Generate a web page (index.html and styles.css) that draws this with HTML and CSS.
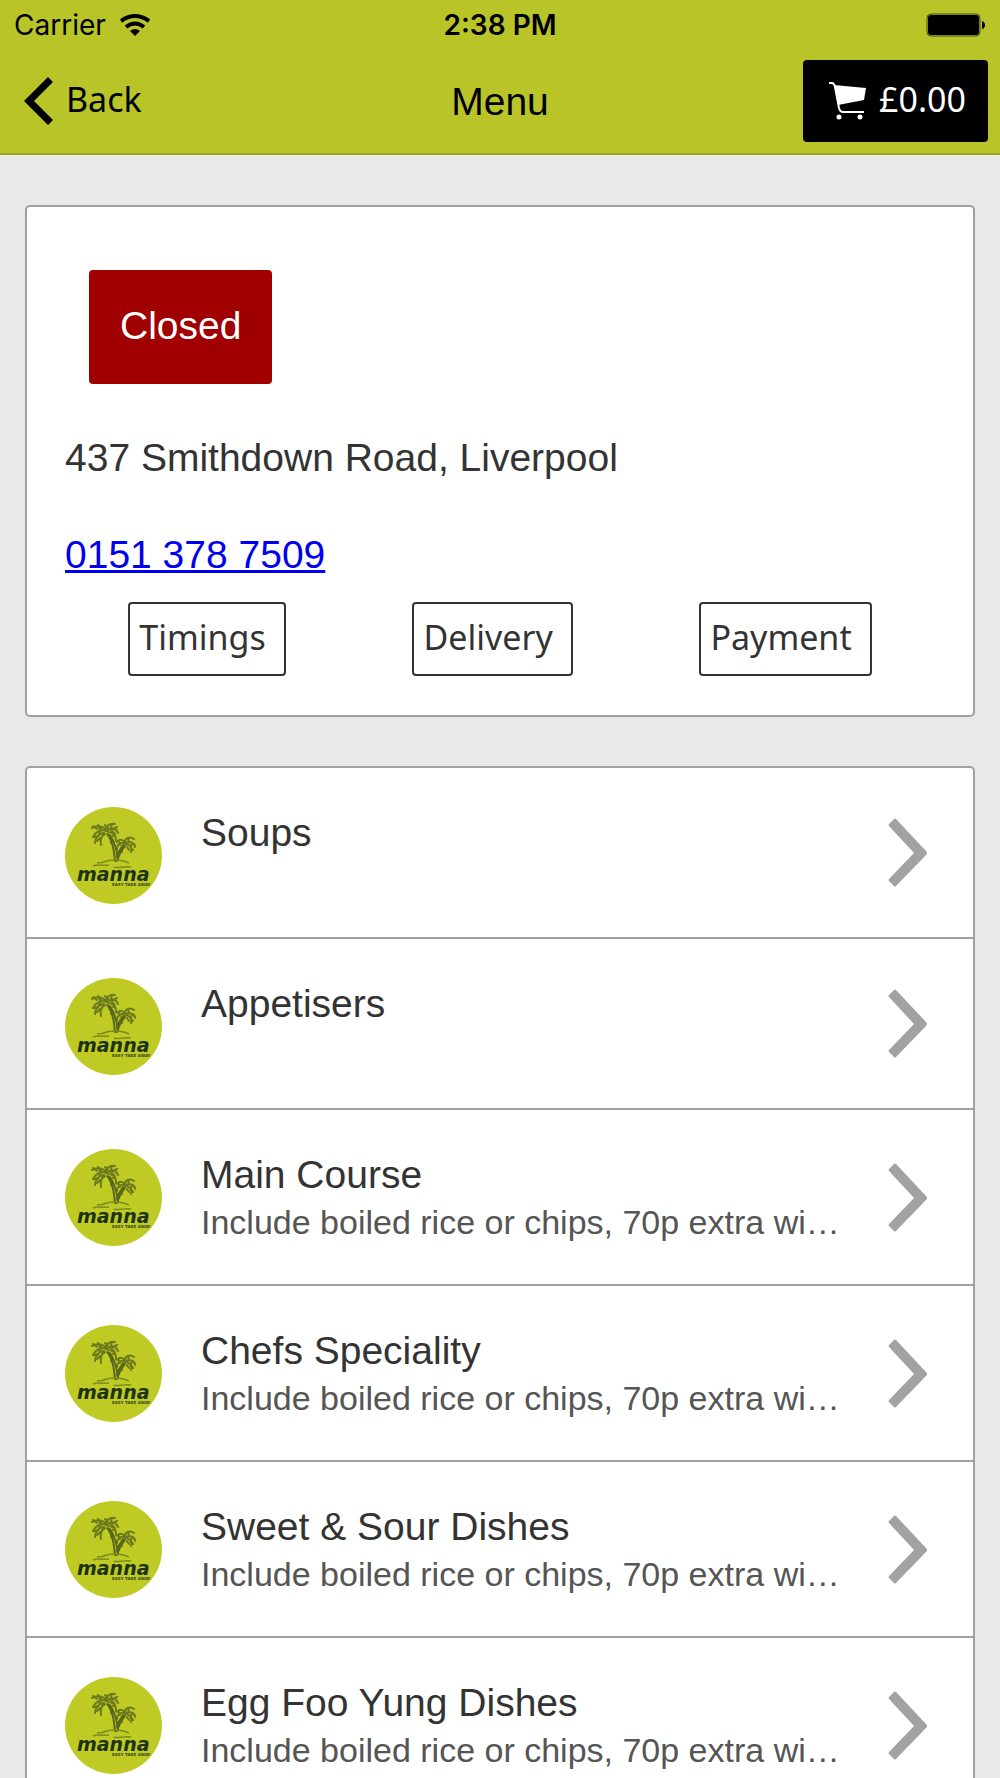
FILE: index.html
```
<!DOCTYPE html>
<html lang="en">
<head>
    <meta charset="UTF-8">
    <meta name="viewport" content="width=device-width, initial-scale=1.0">
    <title>Menu</title>
    <link rel="stylesheet" href="styles.css">
</head>
<body>
    <!-- shared icons -->
    <svg class="defs" width="0" height="0" aria-hidden="true">
        <symbol id="logo" viewBox="0 0 97 97">
            <circle cx="48.500" cy="48.500" r="48.500" fill="#bfca24"/>
            <g fill="none" stroke="#6b7a1c" stroke-width="2" stroke-linecap="round" stroke-linejoin="round">
                <path d="M42 24c-3-5-10-6-15-3M41 24c-5-2-11 1-13 6M39 26c-5 0-9 5-9 10M40 27c-4 2-5 6-4 11"/>
                <path d="M41 23c0-4 4-7 9-6M42 24c4-4 9-3 11 2M43 25c5 0 8 3 8 9M42 27c4 2 5 5 4 9"/>
                <path d="M28 19l4 3M33 18l2 4M29 30l4-1M32 34l3-3M47 17l-1 4M52 20l-4 2M48 29l2-2M40 18l3 3M36 22l-2 5M46 23l3 3"/>
                <path d="M60 36c-2-4-6-4-8-1M60 36c-4-1-8 1-8 6M60 35c0-4 5-6 9-3M61 36c4-2 9 0 9 4M61 37c4 1 7 4 5 8M59 38c-2 2-3 4-2 7"/>
                <path d="M63 31l1 4M68 37l-3 2M54 35l1 3M68 43l-2-2M62 40l2 3"/>
                <path d="M43 28c5 7 6 16 7 26M45 28c5 8 7 14 8 25" stroke="#59681a"/>
                <path d="M60 39c-4 4-6 9-8 15M58 38c-3 4-5 8-6 12" stroke="#59681a"/>
            </g>
            <path d="M36 56c8-4 20-4 28 0M28 59c5-2 11 0 16-1M49 60c4 2 8-1 17 0M32 56l8-1" fill="none" stroke="#7b8c1d" stroke-width="1.500"/>
            <text class="logo-name" x="12" y="74">manna</text>
            <text class="logo-sub" x="47" y="79">EASY TAKE AWAY</text>
        </symbol>
        <symbol id="arrow" viewBox="0 0 40 70">
            <path d="M1 8Q0 7 1 6L6 1Q7 0 8 1L38 33Q40 35 38 37L8 68Q7 69 6 68L1 63Q0 62 1 61L26 35Z" fill="#a2a2a2"/>
        </symbol>
    </svg>

    <header class="header">
        <div class="status">
            <div class="carrier">
                Carrier
                <svg width="30" height="22" viewBox="0 0 30 22">
                    <g fill="none" stroke="#000" stroke-width="4">
                        <path d="M1 7Q15-3 29 7"/>
                        <path d="M6 13Q15 6 24 13"/>
                    </g>
                    <path d="M10 17Q15 13 20 17L15 22Z"/>
                </svg>
            </div>
            <div class="time">2:38 PM</div>
            <svg class="battery" width="60" height="24" viewBox="0 0 60 24">
                <rect x="1" y="1" width="53" height="22" rx="4" fill="none" stroke="#45490d"/>
                <rect x="2" y="2" width="51" height="20" rx="3"/>
                <path d="M56 8Q59 9 59 12T56 16Z"/>
            </svg>
        </div>
        <nav class="nav">
            <a class="back" href="#">
                <svg width="30" height="48" viewBox="0 0 30 48">
                    <path d="M24 0L29 5L10 24L29 43L24 48L0 24Z"/>
                </svg>
                <span>Back</span>
            </a>
            <h1>Menu</h1>
            <button class="basket" type="button">
                <svg width="38" height="38" viewBox="0 0 38 38" fill="#fff">
                    <path d="M5 3L37 6L35 18L9 23Z"/>
                    <path d="M0 1H3Q5 1 6 5L10 26Q11 30 14 30H35" fill="none" stroke="#fff" stroke-width="2"/>
                    <circle cx="10" cy="35" r="2.500"/>
                    <circle cx="31" cy="35" r="2.500"/>
                </svg>
                <span>£0.00</span>
            </button>
        </nav>
    </header>

    <main>
        <section class="card info">
            <div class="closed">Closed</div>
            <p>437 Smithdown Road, Liverpool</p>
            <p><a href="tel:01513787509">0151 378 7509</a></p>
            <div class="buttons">
                <button type="button">Timings</button>
                <button type="button">Delivery</button>
                <button type="button">Payment</button>
            </div>
        </section>

        <ul class="card menu">
            <li>
                <a href="#">
                    <svg class="logo"><use href="#logo"/></svg>
                    <div class="text"><h2>Soups</h2></div>
                    <svg class="arrow"><use href="#arrow"/></svg>
                </a>
            </li>
            <li>
                <a href="#">
                    <svg class="logo"><use href="#logo"/></svg>
                    <div class="text"><h2>Appetisers</h2></div>
                    <svg class="arrow"><use href="#arrow"/></svg>
                </a>
            </li>
            <li>
                <a href="#">
                    <svg class="logo"><use href="#logo"/></svg>
                    <div class="text has-note">
                        <h2>Main Course</h2>
                        <p>Include boiled rice or chips, 70p extra wi…</p>
                    </div>
                    <svg class="arrow"><use href="#arrow"/></svg>
                </a>
            </li>
            <li>
                <a href="#">
                    <svg class="logo"><use href="#logo"/></svg>
                    <div class="text has-note">
                        <h2>Chefs Speciality</h2>
                        <p>Include boiled rice or chips, 70p extra wi…</p>
                    </div>
                    <svg class="arrow"><use href="#arrow"/></svg>
                </a>
            </li>
            <li>
                <a href="#">
                    <svg class="logo"><use href="#logo"/></svg>
                    <div class="text has-note">
                        <h2>Sweet &amp; Sour Dishes</h2>
                        <p>Include boiled rice or chips, 70p extra wi…</p>
                    </div>
                    <svg class="arrow"><use href="#arrow"/></svg>
                </a>
            </li>
            <li>
                <a href="#">
                    <svg class="logo"><use href="#logo"/></svg>
                    <div class="text has-note">
                        <h2>Egg Foo Yung Dishes</h2>
                        <p>Include boiled rice or chips, 70p extra wi…</p>
                    </div>
                    <svg class="arrow"><use href="#arrow"/></svg>
                </a>
            </li>
        </ul>
    </main>
</body>
</html>
```
FILE: styles.css
```
* {
    box-sizing: border-box;
}
html {
    scrollbar-width: none;
}
body {
    margin: 0;
    background: #e9e9e9;
    color: #333;
    font-family: "Liberation Sans", Arial, sans-serif;
    font-size: 39px;
}
h1, h2, p, ul {
    margin: 0;
    padding: 0;
    font-weight: normal;
}
.defs {
    position: absolute;
}

/* header */
.header {
    background: #b8c427;
    border-bottom: 2px solid #98a31f;
    color: #000;
}
.status, .nav {
    display: grid;
    grid-template-columns: minmax(0, 1fr) auto minmax(0, 1fr);
    align-items: center;
}
.status {
    padding: 0 14px;
    height: 50px;
    font-family: Inter, Roboto, sans-serif;
    font-size: 28px;
}
.carrier {
    display: flex;
    align-items: center;
    gap: 14px;
}
.time {
    font-weight: 600;
}
.battery {
    justify-self: end;
}
.nav {
    padding: 10px 12px 11px 24px;
}
.back {
    display: flex;
    align-items: center;
    gap: 12px;
    color: #000;
    font-family: "Noto Sans", sans-serif;
    font-size: 34px;
    line-height: 48px;
    text-decoration: none;
}
.back span, .basket span {
    padding-bottom: 5px;
}
.nav h1 {
    padding: 2px 12px 0 0;
    font-size: 39px;
    line-height: 44px;
}
.basket {
    justify-self: end;
    display: flex;
    align-items: center;
    gap: 12px;
    height: 82px;
    padding: 0 22px 0 26px;
    border: none;
    border-radius: 4px;
    background: #000;
    color: #fff;
    font-family: "Noto Sans", sans-serif;
    font-size: 34px;
    cursor: pointer;
}

/* cards */
.card {
    margin: 50px 25px 49px;
    border: 2px solid #a0a0a0;
    border-radius: 5px;
    background: #fff;
}
.info {
    padding: 39px 38px;
}
.closed {
    width: fit-content;
    margin: 24px 24px 50px;
    padding: 34px 31px 36px;
    border-radius: 4px;
    background: #a00000;
    color: #fff;
    line-height: 44px;
}
.info p {
    margin-bottom: 49px;
    line-height: 48px;
}
.info p a {
    color: #00e;
}
.info p + p {
    margin-bottom: 23px;
}
.buttons {
    display: flex;
    justify-content: space-around;
}
.buttons button {
    height: 74px;
    padding: 0 18px 4px 9px;
    border: 2px solid #333;
    border-radius: 4px;
    background: #fff;
    color: #333;
    font-family: "Noto Sans", sans-serif;
    font-size: 34px;
    cursor: pointer;
}

/* menu list */
.menu {
    margin-top: 49px;
    list-style: none;
}
.menu li + li {
    border-top: 2px solid #a0a0a0;
}
.menu a {
    display: flex;
    padding: 39px 45px 33px 38px;
    color: #333;
    text-decoration: none;
}
.logo {
    flex: none;
    width: 97px;
    height: 97px;
}
.logo-name {
    fill: #1d3316;
    font: italic bold 19px "DejaVu Sans", sans-serif;
}
.logo-sub {
    fill: #33481a;
    font: bold 4px "DejaVu Sans", sans-serif;
}
.text {
    flex: 1;
    min-width: 0;
    margin: 0 40px 0 39px;
}
.text h2 {
    font-size: 39px;
    line-height: 52px;
}
.text p {
    overflow: hidden;
    color: #555;
    font-size: 34px;
    line-height: 43px;
    text-overflow: ellipsis;
    white-space: nowrap;
}
.has-note {
    padding-bottom: 7px;
}
.arrow {
    flex: none;
    align-self: center;
    width: 40px;
    height: 70px;
    margin-bottom: 5px;
}
```
